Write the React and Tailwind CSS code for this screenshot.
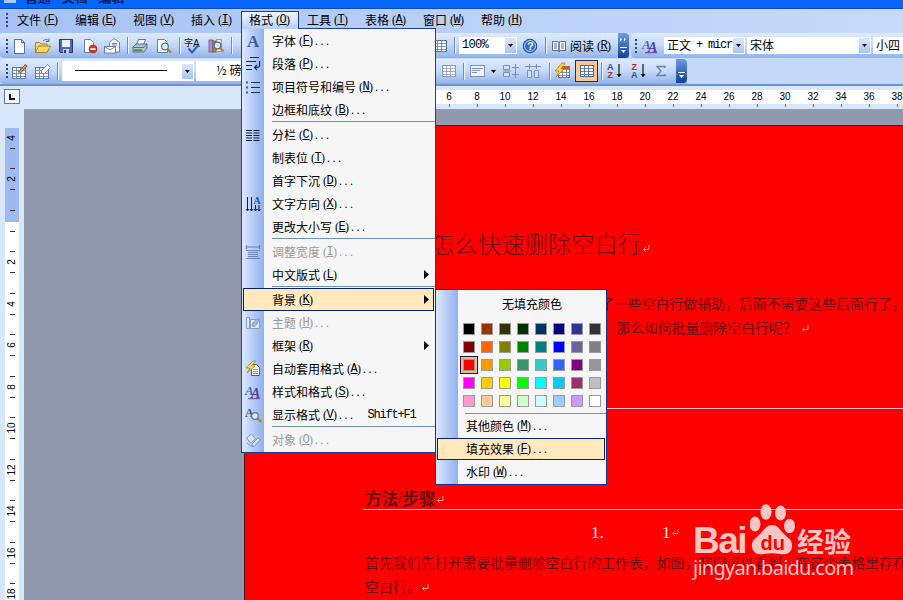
import React from 'react'

const cjk = "font-['Noto_Sans_CJK_SC',sans-serif]"

const swatches = [
  '#000000', '#993300', '#333300', '#003300', '#003366', '#000080', '#333399', '#333333',
  '#800000', '#ff6600', '#808000', '#008000', '#008080', '#0000ff', '#666699', '#808080',
  '#ff0000', '#ff9900', '#99cc00', '#339966', '#33cccc', '#3366ff', '#800080', '#969696',
  '#ff00ff', '#ffcc00', '#ffff00', '#00ff00', '#00ffff', '#00ccff', '#993366', '#c0c0c0',
  '#ff99cc', '#ffcc99', '#ffff99', '#ccffcc', '#ccffff', '#99ccff', '#cc99ff', '#ffffff',
]

const formatMenu = [
  { text: '字体', k: 'F', icon: 'font' },
  { text: '段落', k: 'P', icon: 'para' },
  { text: '项目符号和编号', k: 'N', icon: 'bullets' },
  { text: '边框和底纹', k: 'B' },
  { sep: true },
  { text: '分栏', k: 'C', icon: 'columns' },
  { text: '制表位', k: 'T' },
  { text: '首字下沉', k: 'D' },
  { text: '文字方向', k: 'X', icon: 'direction' },
  { text: '更改大小写', k: 'E' },
  { sep: true },
  { text: '调整宽度', k: 'I', icon: 'width', off: true },
  { text: '中文版式', k: 'L', sub: true },
  { sep: true },
  { text: '背景', k: 'K', sub: true, active: true },
  { text: '主题', k: 'H', icon: 'theme', off: true },
  { text: '框架', k: 'R', sub: true },
  { text: '自动套用格式', k: 'A', icon: 'auto' },
  { text: '样式和格式', k: 'S', icon: 'styles' },
  { text: '显示格式', k: 'V', icon: 'reveal', shortcut: 'Shift+F1' },
  { sep: true },
  { text: '对象', k: 'O', icon: 'object', off: true },
]

const Grid = ({ c = '#5a78b0', x = 1, y = 2, w = 14, h = 12 }) => (
  <g>
    <rect x={x + 0.5} y={y + 0.5} width={w - 1} height={h - 1} fill="#fff" stroke={c} />
    <path
      d={`M${x} ${y + 3.5}h${w}M${x} ${y + 6.5}h${w}M${x} ${y + 9.5}h${w}M${x + 4.5} ${y}v${h}M${x + 8.5} ${y}v${h}`}
      stroke={c}
      strokeWidth="0.8"
      fill="none"
    />
  </g>
)

const Lens = ({ x = 9, y = 9 }) => (
  <g>
    <path d={`M${x + 2} ${y + 2}l4 4`} stroke="#c07830" strokeWidth="2" />
    <circle cx={x} cy={y} r="3.3" fill="#d6ecfb" stroke="#5d7486" strokeWidth="1.2" />
  </g>
)

const art = {
  newDoc: (
    <path d="M3.5 1.5h7l3 3v11h-10zM10.5 1.5v3h3" fill="#fff" stroke="#5b6f94" />
  ),
  open: (
    <g stroke="#a07818" strokeWidth="0.9">
      <path d="M.5 14.500V4.500h4l1.500 1.500h6v3" fill="#f7d774" />
      <path d="M.5 14.500l3-6.500h12l-3.500 6.500z" fill="#fbd85f" />
      <path d="M8 3c2-2 4-2 6 0m0-2.500V3.500h-3" fill="none" stroke="#4a6a9a" />
    </g>
  ),
  save: (
    <g>
      <path d="M1.500 1.500h13v13h-12l-1-1z" fill="#5a66b8" stroke="#2c357d" />
      <rect x="4" y="2" width="8" height="7" fill="#eef2ff" />
      <rect x="5" y="11" width="6" height="4" fill="#c9cfe8" />
      <rect x="6" y="12" width="2" height="3" fill="#2c357d" />
    </g>
  ),
  perm: (
    <g>
      <path d="M2.500 1.500h6l3 3v10h-9z" fill="#fff" stroke="#6b7da2" />
      <circle cx="11" cy="11" r="4" fill="#d8341c" stroke="#9b2412" strokeWidth=".6" />
      <rect x="8.500" y="10.200" width="5" height="1.800" fill="#fff" />
    </g>
  ),
  mail: (
    <g stroke="#66779a" strokeWidth="0.9">
      <path d="M5.500 8V4.500L10 .5l5.500 4v9.500H12z" fill="#f6f8fd" />
      <path d="M8 5.500h5M8 7h5" />
      <rect x=".5" y="8.500" width="11" height="6.500" fill="#fff" />
      <path d="M.5 8.500l5.500 3.500 5.500-3.500" fill="none" />
    </g>
  ),
  print: (
    <g stroke="#566680" strokeWidth="0.9">
      <path d="M4.500 6.500l2-5h7l-2 5z" fill="#fff" />
      <path d="M1 9l3-3h11v4l-3 4H1z" fill="#b4bfcd" />
      <path d="M1 9.500h11l3-3" fill="none" />
      <path d="M2 12.200h8" stroke="#2f9d3e" strokeWidth="1.600" />
    </g>
  ),
  preview: (
    <g>
      <path d="M1.500 1.500h7l3 3v10h-10z" fill="#fff" stroke="#6b7da2" />
      <Lens x={9} y={8.500} />
    </g>
  ),
  spell: (
    <g>
      <text x="-1" y="8" fontSize="9" fill="#111" fontFamily="Noto Sans CJK SC">字</text>
      <text x="8" y="9" fontSize="10" fill="#111" fontFamily="Liberation Sans">A</text>
      <path d="M3.500 10.500l3.500 4 6-7" fill="none" stroke="#2c61b8" strokeWidth="2" />
    </g>
  ),
  research: (
    <g>
      <rect x="1" y="2" width="4" height="12" fill="#b48acb" stroke="#64447d" strokeWidth=".7" />
      <rect x="5" y="3" width="3" height="11" fill="#c98448" stroke="#7a4a1e" strokeWidth=".7" />
      <path d="M8.500 1.500h5v12h-5z" fill="#f3e9b8" stroke="#8d8046" strokeWidth=".7" />
      <Lens x={9.500} y={7.500} />
    </g>
  ),
  table: <Grid />,
  drawTable: (
    <g>
      <Grid x={0} y={4} />
      <path d="M7 10l7.500-8" stroke="#7b4a22" strokeWidth="3" />
      <path d="M7 10l7-7.500" stroke="#e6a766" strokeWidth="1.400" />
    </g>
  ),
  erase: (
    <g>
      <Grid x={0} y={4} />
      <path d="M6.500 7.500l6-6 3 3-6 6h-3z" fill="#fff" stroke="#6c7ba0" strokeWidth=".9" />
    </g>
  ),
  help: (
    <g>
      <circle cx="8" cy="8" r="6.800" fill="#2f6cc5" stroke="#1a4a97" />
      <circle cx="8" cy="8" r="5.500" fill="none" stroke="#d8e8fc" strokeWidth=".8" />
      <text x="5" y="12" fontSize="11" fontWeight="bold" fill="#fff" fontFamily="Liberation Sans">?</text>
    </g>
  ),
  book: (
    <g stroke="#4b5c7a" strokeWidth=".9">
      <path d="M1.500 3.500h4.500q2 0 2 1.500v8.500q0-1-2-1H1.500zM14.500 3.500H10q-2 0-2 1.500v8.500q0-1 2-1h4.500z" fill="#fff" />
      <path d="M3 6h3M3 8h3M3 10h3M10 6h3M10 8h3M10 10h3" />
    </g>
  ),
  merge: <Grid c="#8d9bb8" />,
  align: (
    <g stroke="#7f8fae">
      <rect x=".5" y="2.500" width="14" height="11" fill="#eef3fc" />
      <path d="M2 5.500h11M2 7.500h8M2 9.500h5" />
    </g>
  ),
  rows: (
    <g stroke="#7f8fae" fill="#d3dff3">
      <path d="M.5 2.500h6v4h-6zM.5 9.500h6v4h-6z" />
      <path d="M9 4.500h7M9 11.500h7M12.500 1v14M0 8h8" />
    </g>
  ),
  cols: (
    <g stroke="#7f8fae" fill="#d3dff3">
      <path d="M2.500 7.500h4v7h-4zM9.500 7.500h4v7h-4z" />
      <path d="M0 3.500h16M4.500 1v5M11.500 1v5" />
    </g>
  ),
  auto: (
    <g>
      <path d="M6.500 3.500h5l3 3v8h-8z" fill="#fff" stroke="#555f78" />
      <path d="M8 8.500h5M8 10.500h5M8 12.500h5" stroke="#6f7c99" strokeWidth=".8" />
      <path d="M8 0L1 7h4l-3 5 8-7H6.500l4-5z" fill="#ffe25a" stroke="#9a7413" strokeWidth=".7" />
    </g>
  ),
  autoTable: (
    <g>
      <Grid x={3} y={3} w={12} />
      <rect x="3" y="3" width="12" height="3" fill="#c2602a" />
      <path d="M7 0L0 8h4l-3 6 8-8H6l4-6z" fill="#ffd83c" stroke="#b0700f" strokeWidth=".7" />
    </g>
  ),
  showGrid: <Grid c="#4466aa" />,
  az: (
    <g fontFamily="Liberation Sans" fontSize="9" fontWeight="bold">
      <text x="0" y="7" fill="#2c4f9e">A</text>
      <text x="0.500" y="15" fill="#b3332c">Z</text>
      <path d="M12 1v12" stroke="#111" strokeWidth="1.200" />
      <path d="M9.500 11l2.500 3.500 2.500-3.500z" fill="#111" />
    </g>
  ),
  za: (
    <g fontFamily="Liberation Sans" fontSize="9" fontWeight="bold">
      <text x="0.500" y="7" fill="#b3332c">Z</text>
      <text x="0" y="15" fill="#2c4f9e">A</text>
      <path d="M12 1v12" stroke="#111" strokeWidth="1.200" />
      <path d="M9.500 11l2.500 3.500 2.500-3.500z" fill="#111" />
    </g>
  ),
  sum: <path d="M12 5V3.500H4l4 4.500-4 4.500h8V11" fill="none" stroke="#6c7fa6" strokeWidth="1.300" />,
  font: (
    <text x="2" y="14" fontSize="17" fontWeight="bold" fill="#3d5c92" fontFamily="Liberation Serif">A</text>
  ),
  para: (
    <path d="M5 1.500h9M1 5.500h10M1 9.500h6M1 13.500h6M14.500 5v5q0 1.500-4 1.500M12 9l-2.500 2.500L12 14" stroke="#1c2a4c" strokeWidth="1.200" fill="none" />
  ),
  bullets: (
    <g>
      <path d="M6 3.500h9M6 8.500h9M6 13.500h9" stroke="#1c2a4c" />
      <path d="M1 2.500h2v2H1zM1 7.500h2v2H1zM1 12.500h2v2H1z" fill="#3b5fa8" />
    </g>
  ),
  columns: (
    <path d="M1 3.500h6M1 6h6M1 8.500h6M1 11h6M1 13.500h6M8.500 3.500h6M8.500 6h6M8.500 8.500h6M8.500 11h6M8.500 13.500h6" stroke="#111c3a" strokeWidth="1.200" />
  ),
  direction: (
    <g>
      <path d="M2.500 1v13M6.500 1v13M10.500 9v5M14 9v5M1 13l1.500 2 1.500-2M5 13l1.500 2 1.500-2M9 13l1.500 2 1.500-2M12.500 13l1.500 2 1.500-2" stroke="#16213f" fill="none" />
      <text x="8.500" y="8" fontSize="10" fill="#2d5590" fontFamily="Liberation Serif" fontWeight="bold">A</text>
    </g>
  ),
  width: (
    <path d="M1.500 1v4M14.500 1v4M2 3h12M1 6.500h14M3 8.500h10M3 10.500h10M3 12.500h10M1 14.500h14" stroke="#7186b4" strokeWidth="1.200" fill="none" />
  ),
  theme: (
    <g stroke="#8c9dc2" fill="#dfe8f8">
      <path d="M1.500 2.500h3v11h-3zM5.500 4.500h9v9h-9z" />
      <path d="M7 11q0-4 7-8-1 7-5 8.500z" fill="#a9b8d6" />
    </g>
  ),
  styles: (
    <g fontFamily="Liberation Serif" fontWeight="bold" fontStyle="italic">
      <text x="0" y="11" fontSize="13" fill="#3c6cae">A</text>
      <text x="6" y="13.500" fontSize="14" fill="#5a3f9c">A</text>
      <path d="M3 14.700h12" stroke="#6a3ea0" />
    </g>
  ),
  reveal: (
    <g>
      <text x="0" y="9.500" fontSize="12" fontWeight="bold" fill="#2f5c93" fontFamily="Liberation Serif">A</text>
      <Lens x={10} y={9} />
    </g>
  ),
  object: (
    <g stroke="#8799bd" fill="#d7e1f3">
      <path d="M1.500 6l5-4 4 5-5 4zM7 12l6-6 2 2-6 6.500H7z" />
      <path d="M2 11q3 4 7 3" fill="none" />
    </g>
  ),
}

const Icon = ({ name, className = '' }) => (
  <svg viewBox="0 0 16 16" className={`h-4 w-4 shrink-0 overflow-visible ${className}`}>
    {art[name]}
  </svg>
)

// "(K)" accelerator with the underlined letter
const Key = ({ k, dots }) => (
  <span className="ml-[3px] flex items-center font-['Liberation_Serif',serif] text-[12px] leading-none">
    <span>(</span>
    <span className="-mx-[0.6px] font-['Liberation_Mono',monospace] underline underline-offset-1">{k}</span>
    <span>)</span>
    {dots && <span className="ml-[2px] tracking-[2.500px]">...</span>}
  </span>
)

const Handle = ({ className = '' }) => (
  <div className={`flex shrink-0 flex-col gap-[2px] ${className}`}>
    {[0, 1, 2, 3].map((i) => (
      <i key={i} className="h-[2px] w-[2px] bg-[#27418c]" />
    ))}
  </div>
)

const Sep = ({ className = '' }) => (
  <div className={`h-[17px] w-px shrink-0 bg-[#6a8ccb] shadow-[1px_0_0_#eef5ff] ${className}`} />
)

const Down = () => (
  <svg viewBox="0 0 5 3" className="h-[3px] w-[5px]">
    <path d="M0 0h5L2.500 3z" fill="#000" />
  </svg>
)

const Combo = ({ children, className = '' }) => (
  <div className={`flex h-[17px] shrink-0 items-center justify-between bg-white text-xs leading-none ${className}`}>
    <span className="flex h-full flex-1 items-center pb-[2px] pl-[3px] whitespace-nowrap">{children}</span>
    <span className="mr-px flex h-[15px] w-[11px] shrink-0 items-center justify-center bg-linear-to-b from-[#dce9fd] to-[#a9c4ef]">
      <Down />
    </span>
  </div>
)

const Overflow = ({ arrows, className = '' }) => (
  <div className={`flex h-full w-[11px] shrink-0 flex-col items-center justify-between rounded-r-sm bg-linear-to-b from-[#6f9ae6] to-[#123f98] py-1 ${className}`}>
    <svg viewBox="0 0 7 5" className="h-[5px] w-[7px]">
      {arrows && <path d="M0 .5l2 2-2 2zM4 .5l2 2-2 2z" fill="#fff" />}
    </svg>
    <svg viewBox="0 0 7 7" className="h-[7px] w-[7px]">
      <path d="M0 .5h7" stroke="#fff" />
      <path d="M1 3h5L3.500 6z" fill="#fff" />
    </svg>
  </div>
)

const bar = 'bg-linear-to-b from-[#dfebfe] via-[#c3d8f9] to-[#91b3e9]'

const MenuBar = () => {
  const items = [
    ['文件', 'F'],
    ['编辑', 'E'],
    ['视图', 'V'],
    ['插入', 'I'],
    ['格式', 'O'],
    ['工具', 'T'],
    ['表格', 'A'],
    ['窗口', 'W'],
    ['帮助', 'H'],
  ]
  return (
    <div className="flex h-6 shrink-0 items-start bg-linear-to-r from-[#a5c1f5] via-[#b9d0f8] to-[#c6daf9] pt-[2px] pl-[6px]">
      <Handle className="mt-[2px]" />
      <div className="ml-px flex">
        {items.map(([text, k]) => (
          <div
            key={k}
            className={`flex h-[18px] w-[58px] items-center text-xs leading-none ${
              k === 'O' ? 'border border-b-0 border-[#1c3f94] bg-linear-to-b from-[#f0f6ff] to-[#b9d0f7] pb-px pl-[7px]' : 'pl-2'
            }`}
          >
            {text}
            <Key k={k} />
          </div>
        ))}
      </div>
    </div>
  )
}

const ToolbarOne = () => (
  <div className="flex h-[25px] shrink-0">
    <div className={`flex w-[629px] shrink-0 items-center rounded-l-sm pl-[6px] ${bar}`}>
      <Handle />
      <Icon name="newDoc" className="ml-[3px]" />
      <Icon name="open" className="ml-2" />
      <Icon name="save" className="ml-[7px]" />
      <Icon name="perm" className="ml-2" />
      <Icon name="mail" className="ml-[6px]" />
      <Sep className="ml-[7px]" />
      <Icon name="print" className="ml-1" />
      <Icon name="preview" className="ml-2" />
      <Sep className="ml-[7px]" />
      <Icon name="spell" className="ml-[5px]" />
      <Icon name="research" className="ml-[7px]" />
      <Sep className="ml-[7px]" />
      <Icon name="table" className="ml-[200px]" />
      <Sep className="ml-[6px]" />
      <Combo className="ml-1 w-[58px]">
        <span className="font-['Liberation_Mono',monospace] text-[12px] tracking-[-0.7px]">100%</span>
      </Combo>
      <Icon name="help" className="ml-[5px]" />
      <Sep className="ml-[7px]" />
      <Icon name="book" className="ml-[5px]" />
      <span className="ml-[3px] flex w-[46px] shrink-0 items-center text-xs leading-none">
        阅读
        <Key k="R" />
      </span>
      <Overflow arrows className="ml-auto" />
    </div>
    <div className={`ml-[2px] flex flex-1 items-center rounded-l-sm pl-1 ${bar}`}>
      <Handle />
      <Icon name="styles" className="ml-[5px]" />
      <Combo className="ml-[6px] w-[81px]">
        正文
        <span className="ml-[5px] font-['Liberation_Mono',monospace] text-[12px] tracking-[-1.200px] whitespace-pre">+ micr</span>
      </Combo>
      <Combo className="ml-[2px] w-[124px]">宋体</Combo>
      <div className="ml-[2px] flex h-[17px] flex-1 items-center bg-white pb-[2px] pl-[3px] text-xs leading-none whitespace-nowrap">小四</div>
    </div>
  </div>
)

const ToolbarTwo = () => (
  <div className="mt-px flex h-[25px] shrink-0 bg-[#c4d9f8]">
    <div className={`flex w-[687px] shrink-0 items-center rounded-l-sm pb-px pl-[6px] ${bar}`}>
      <Handle />
      <Icon name="drawTable" className="ml-1" />
      <Icon name="erase" className="ml-[7px]" />
      <Sep className="ml-[6px]" />
      <Combo className="ml-1 h-[20px] w-[132px]">
        <i className="ml-[10px] h-px w-[92px] bg-black" />
      </Combo>
      <Combo className="ml-[2px] h-[20px] w-[80px]">
        <span className="ml-[17px]">½ 磅</span>
      </Combo>
      <Icon name="merge" className="ml-[165px]" />
      <Sep className="ml-[6px]" />
      <Icon name="align" className="ml-[6px]" />
      <span className="ml-[5px]"><Down /></span>
      <Icon name="rows" className="ml-[7px]" />
      <Icon name="cols" className="ml-[6px]" />
      <Sep className="ml-2" />
      <Icon name="autoTable" className="ml-[5px]" />
      <span className="ml-[4px] flex h-[22px] w-[23px] shrink-0 items-center justify-center border border-[#1b2a6b] bg-[#fbc98f]">
        <Icon name="showGrid" />
      </span>
      <Sep className="ml-[3px]" />
      <Icon name="az" className="ml-[5px]" />
      <Icon name="za" className="ml-2" />
      <Icon name="sum" className="ml-[6px]" />
      <Overflow className="ml-auto" />
    </div>
  </div>
)

const HRuler = () => (
  <div className="flex h-6 shrink-0 border-t border-[#8b8f8d] bg-[#d8e7fb]">
    <div className="w-[242px] shrink-0 pt-[3px] pl-1">
      <div className="flex h-[15px] w-4 items-center justify-center border border-[#5b77a8] bg-[#f4f8ff]">
        <i className="h-[6px] w-[6px] border-b-2 border-l-2 border-black" />
      </div>
    </div>
    <div className="mt-1 flex h-[14px] flex-1 overflow-hidden bg-white pl-[193px]">
      {Array.from({ length: 17 }, (_, i) => (
        <div key={i} className="flex w-7 shrink-0 flex-col items-center font-['Liberation_Sans',sans-serif] text-[10px] leading-[14px]">
          {6 + i * 2}
        </div>
      ))}
    </div>
  </div>
)

const HTicks = () => (
  <div className="-mt-[5px] mb-[2px] flex h-[3px] shrink-0 overflow-hidden pl-[435px]">
    {Array.from({ length: 17 }, (_, i) => (
      <div key={i} className="flex w-7 shrink-0 justify-center">
        <i className="h-[3px] w-px bg-[#667]" />
      </div>
    ))}
  </div>
)

const VRuler = () => (
  <div className="w-6 shrink-0 bg-[#d8e7fb] pt-[19px] pl-[5px]">
    <div className="h-[472px] w-[14px] overflow-hidden bg-linear-to-b from-[#9ebaf1] from-[94px] to-white to-[94px]">
      <div className="-mt-[11px] font-['Liberation_Sans',sans-serif] text-[10px] leading-none">
        {['4', '2', '', '2', '4', '6', '8', '10', '12', '14', '16', '18'].map((n, i) => (
          <div key={i} className="flex h-[41.5px] flex-col items-center justify-center">
            <i className={`h-px w-[5px] ${i ? 'bg-[#333]' : ''}`} />
            <span className="flex h-5 items-center">
              <span className="-rotate-90">{n}</span>
            </span>
            <i className="h-px w-[5px] bg-[#333]" />
          </div>
        ))}
      </div>
    </div>
  </div>
)

const Enter = ({ className = '' }) => (
  <svg viewBox="0 0 8 8" className={`inline-block h-2 w-2 shrink-0 ${className}`}>
    <path d="M7 0v4.500H1.500M3.500 2.500l-2 2 2 2" stroke="#e8a0a8" fill="none" />
  </svg>
)

const Watermark = () => (
  <div className="absolute top-[504px] left-[693px] text-[#ffd0d0] opacity-95">
    <div className="flex h-[51px] items-end">
      <span className="-mb-[5px] w-[57px] font-['Liberation_Sans',sans-serif] text-[37px] leading-[38px] font-bold tracking-[-1.500px]">Bai</span>
      <svg viewBox="0 0 48 51" className="h-[51px] w-12 shrink-0" fill="#ffd0d0">
        <ellipse cx="5" cy="20" rx="5.500" ry="7.500" />
        <ellipse cx="16" cy="8" rx="5.500" ry="7.800" />
        <ellipse cx="30.500" cy="9" rx="5.500" ry="7.500" />
        <ellipse cx="39.500" cy="22" rx="5.500" ry="7.300" />
        <path d="M22 21c6 0 8 5 12 9s9 6 8 13-7 8-12 7-11-1-16 0-11 0-12-7 4-9 8-13 6-9 12-9z" />
        <text x="10.500" y="46" fontSize="20" fontWeight="bold" fill="#f00" fontFamily="Liberation Sans">du</text>
      </svg>
      <span className="-ml-px text-[27px] leading-[29px] font-bold">经验</span>
    </div>
    <div className="mt-px font-['Noto_Sans',sans-serif] text-[20px] leading-[24px] tracking-[-0.75px]">jingyan.baidu.com</div>
  </div>
)

const Page = () => (
  <div className="mt-4 ml-[220px] flex-1 overflow-hidden border-t border-l border-[#5a1020] bg-[#fe0000] text-[13.9px] leading-6 whitespace-nowrap text-[#6b0a10]">
    <div className="mt-[99px] ml-[186px] flex h-9 items-center text-[23.400px] font-light">
      怎么快速删除空白行
      <Enter className="mt-3" />
    </div>
    <div className="mt-[30px] ml-[355px]">了一些空白行做辅助，后面不需要这些后面行了，</div>
    <div className="ml-[371px]">
      那么如何批量删除空白行呢？
      <Enter className="ml-1" />
    </div>
    <div className="mt-[69px] ml-[118px] h-px bg-[#ffc8c8]" />
    <div className="mt-[77px] ml-[118px] flex h-[24px] items-center border-b border-[#ffc8c8] pl-[2px] text-[16.500px] font-bold">
      方法<span className="font-['Liberation_Serif',serif] font-normal">/</span>步骤
      <Enter className="mt-1" />
    </div>
    <div className="mt-[11px] ml-[346px] flex font-['Liberation_Serif',serif] text-[17px] text-[#ffe6e6]">
      <span className="w-[71px]">1.</span>
      <span>1</span>
      <Enter className="mt-2" />
    </div>
    <div className="mt-[5px] ml-[120px]">首先我们先打开需要批量删除空白行的工作表，如图，我们可以看到，在这个表格里存在</div>
    <div className="ml-[120px]">
      空白行。
      <Enter />
    </div>
  </div>
)

const FormatMenu = () => (
  <div className="absolute top-7 left-[241px] h-[425px] w-[195px] border border-[#1c3f94] bg-[#f6f6f6] text-xs leading-none">
    <i className="absolute -top-px left-0 h-px w-[56px] bg-[#b9d0f7]" />
    <div className="h-full bg-linear-to-r from-[#dde9fe] to-[#8fb1ec] bg-[length:22px_100%] bg-no-repeat">
      {formatMenu.map((it, i) =>
        it.sep ? (
          <div key={i} className="flex h-[2px] items-start pl-[30px]">
            <i className="h-px flex-1 bg-[#6d8fc4]" />
          </div>
        ) : (
          <div
            key={i}
            className={`flex h-[23px] items-center ${it.off ? 'text-[#9a9a9a]' : 'text-black'} ${
              it.active ? 'mx-px border border-[#0a1f6b] bg-[#ffe9bd]' : 'px-[2px]'
            }`}
          >
            <span className="flex w-7 shrink-0 pl-px">{it.icon && <Icon name={it.icon} />}</span>
            <span>{it.text}</span>
            <Key k={it.k} dots={!it.sub} />
            {it.shortcut && (
              <span className="ml-3 font-['Liberation_Mono',monospace] text-[12px] tracking-[-1.200px]">{it.shortcut}</span>
            )}
            {it.sub && (
              <svg viewBox="0 0 5 9" className="mr-[4px] ml-auto h-[9px] w-[5px]">
                <path d="M0 0l5 4.500L0 9z" />
              </svg>
            )}
          </div>
        )
      )}
    </div>
  </div>
)

const BackgroundMenu = () => (
  <div className="absolute top-[289px] left-[435px] h-[196px] w-[172px] border border-[#1c2f94] bg-[#f6f6f6] text-xs leading-none">
    <div className="h-full bg-linear-to-r from-[#dde9fe] to-[#8fb1ec] bg-[length:22px_100%] bg-no-repeat pt-[3px]">
      <div className="flex h-[22px] items-center justify-center pb-px pl-[22px]">无填充颜色</div>
      <div className="mt-[5px] ml-6 grid w-36 grid-cols-8">
        {swatches.map((c, i) => (
          <div
            key={i}
            className={`flex h-[18px] w-[18px] items-center justify-center ${
              c === '#ff0000' ? 'border border-[#1a1a5a] bg-[#f5b483]' : ''
            }`}
          >
            <i className="h-3 w-3 border border-[#9a9a9a]" style={{ backgroundColor: c }} />
          </div>
        ))}
      </div>
      <div className="mt-[3px] ml-[29px] h-px bg-[#6d8fc4]" />
      <div className="flex h-6 items-center pl-[30px]">
        其他颜色
        <Key k="M" dots />
      </div>
      <div className="mx-px flex h-[22px] items-center border border-[#0a1f6b] bg-[#ffe9bd] pl-7">
        填充效果
        <Key k="F" dots />
      </div>
      <div className="flex h-6 items-center pl-[30px]">
        水印
        <Key k="W" dots />
      </div>
    </div>
  </div>
)

const App = () => {
  return (
    <div className={`relative flex h-[600px] w-[903px] flex-col overflow-hidden bg-[#c4d9f8] text-black ${cjk}`}>
      <div className="flex h-[9px] shrink-0 overflow-hidden border-b border-[#0a49c4] bg-[#0665fb] pl-1">
        <i className="h-[3px] w-3 bg-[#a9c8f5]" />
        <span className="-mt-[11px] ml-[9px] text-[13px] leading-[15px] font-bold text-[#08205e]">普通 - 文档 - 编辑</span>
      </div>
      <MenuBar />
      <ToolbarOne />
      <ToolbarTwo />
      <div className="h-px shrink-0 bg-[#6f93d3]" />
      <HRuler />
      <HTicks />
      <div className="flex min-h-0 flex-1">
        <VRuler />
        <div className="flex min-w-0 flex-1 bg-[#9199ae]">
          <Page />
        </div>
      </div>
      <FormatMenu />
      <BackgroundMenu />
      <Watermark />
    </div>
  )
}

export default App
